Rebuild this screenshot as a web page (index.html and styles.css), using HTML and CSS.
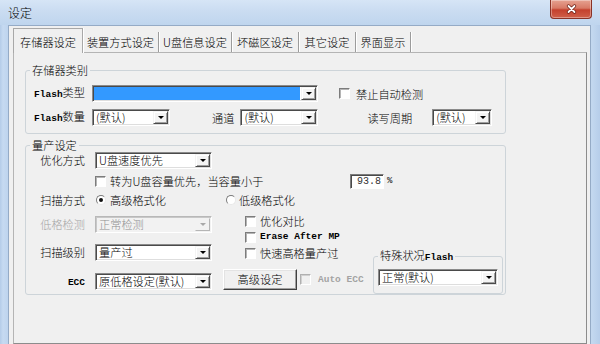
FILE: index.html
```html
<!DOCTYPE html>
<html lang="zh-CN">
<head>
<meta charset="utf-8">
<title>设定</title>
<link rel="stylesheet" href="styles.css">
</head>
<body>
<div class="window">
  <div class="titlebar">
    <span class="title">设定</span>
    <div class="close">
      <svg width="11" height="10" viewBox="0 0 11 10"><path d="M2.5 2 L8.5 8 M8.5 2 L2.5 8" stroke="#6a1e14" stroke-width="3.2" stroke-linecap="round"/><path d="M2.5 2 L8.5 8 M8.5 2 L2.5 8" stroke="#fff" stroke-width="1.8" stroke-linecap="round"/></svg>
    </div>
  </div>
  <div class="client">
    <div class="tabs">
      <div class="tab active t1">存储器设定</div>
      <div class="tab t2">装置方式设定</div>
      <div class="tab t3">U盘信息设定</div>
      <div class="tab t4">坏磁区设定</div>
      <div class="tab t5">其它设定</div>
      <div class="tab t6">界面显示</div>
    </div>
    <div class="panel">
      <fieldset class="group g1">
        <legend>存储器类别</legend>
        <div class="row">
          <span class="lbl"><span class="fx">Flash</span>类型</span>
          <div class="combo sel flash-type"><span class="val"></span><span class="arrow"></span></div>
          <span class="chk auto-detect"></span>
          <span class="chk-text">禁止自动检测</span>
        </div>
        <div class="row">
          <span class="lbl"><span class="fx">Flash</span>数量</span>
          <div class="combo flash-count"><span class="val">(默认)</span><span class="arrow"></span></div>
          <span class="channel-lbl">通道</span>
          <div class="combo channel"><span class="val">(默认)</span><span class="arrow"></span></div>
          <span class="cycle-lbl">读写周期</span>
          <div class="combo cycle"><span class="val">(默认)</span><span class="arrow"></span></div>
        </div>
      </fieldset>

      <fieldset class="group g2">
        <legend>量产设定</legend>
        <div class="row r-opt">
          <span class="lbl">优化方式</span>
          <div class="combo wide"><span class="val">U盘速度优先</span><span class="arrow"></span></div>
        </div>
        <div class="row r-cap">
          <span class="lbl"></span>
          <span class="chk cap-chk"></span>
          <span class="cap-text">转为U盘容量优先，当容量小于</span>
          <span class="num">93.8</span>
          <span class="pct">%</span>
        </div>
        <div class="row r-scan">
          <span class="lbl">扫描方式</span>
          <span class="radio on r1"></span>
          <span class="radio-text">高级格式化</span>
          <span class="radio r2"></span>
          <span class="radio-text t-low">低级格式化</span>
        </div>
        <div class="lower">
          <div class="lcol">
            <div class="row r-lowchk">
              <span class="lbl disabled">低格检测</span>
              <div class="combo wide dis"><span class="val">正常检测</span><span class="arrow"></span></div>
            </div>
            <div class="row r-level">
              <span class="lbl">扫描级别</span>
              <div class="combo wide"><span class="val">量产过</span><span class="arrow"></span></div>
            </div>
            <div class="row r-ecc">
              <span class="lbl"><span class="fx">ECC</span></span>
              <div class="combo wide"><span class="val">原低格设定(默认)</span><span class="arrow"></span></div>
            </div>
          </div>
          <div class="rcol">
            <div class="rcol-a">
              <div class="checks">
                <div class="crow"><span class="chk"></span><span class="chk-text">优化对比</span></div>
                <div class="crow"><span class="chk"></span><span class="chk-text fx">Erase After MP</span></div>
                <div class="crow"><span class="chk"></span><span class="chk-text">快速高格量产过</span></div>
              </div>
              <div class="btnrow">
                <span class="btn">高级设定</span>
                <span class="chk dchk"></span>
                <span class="chk-text fx disabled auto-ecc">Auto ECC</span>
              </div>
            </div>
            <fieldset class="group g3">
              <legend>特殊状况<span class="fx">Flash</span></legend>
              <div class="combo special"><span class="val">正常(默认)</span><span class="arrow"></span></div>
            </fieldset>
          </div>
        </div>
      </fieldset>
    </div>
  </div>
</div>
</body>
</html>
```

FILE: styles.css
```css
* { box-sizing: border-box; }
html, body { margin: 0; padding: 0; }
body {
  width: 600px;
  height: 344px;
  overflow: hidden;
  font-family: "Noto Sans CJK SC", "Noto Sans", sans-serif;
  font-size: 11.2px;
  font-weight: 300;
  line-height: 16px;
  color: #000;
  background: #c0d5ee;
}
.window {
  width: 600px;
  height: 344px;
  display: flex;
  flex-direction: column;
  background: linear-gradient(90deg, #b4cce8 0, #c6daf1 3px, #bed4ee 8px, #c3d8ef 592px, #b6cde9 600px);
}
.titlebar {
  height: 25px;
  flex: none;
  display: flex;
  justify-content: space-between;
  align-items: flex-start;
  padding: 0 8px;
  background: linear-gradient(180deg, #d6e5f6 0%, #cadcf1 45%, #bfd5ee 100%);
}
.title { margin-top: 6px; font-size: 12px; line-height: 14px; }
.close {
  width: 42px;
  height: 19px;
  border: 1px solid #8a3226;
  border-top: none;
  border-radius: 0 0 4px 4px;
  background: linear-gradient(180deg, #e6a291 0%, #d87a66 45%, #c4412d 55%, #d0604a 100%);
  box-shadow: inset 0 0 0 1px rgba(255,255,255,0.35);
  display: flex;
  align-items: center;
  justify-content: center;
}
.client {
  flex: 1;
  margin: 0 9px 0 8px;
  background: #f0f0f0;
  border: 1px solid #95abc6;
  border-bottom: none;
  padding: 2px 3px 0 4px;
  display: flex;
  flex-direction: column;
}
.tabs { display: flex; height: 24px; align-items: flex-end; flex: none; }
.tab {
  height: 20px;
  line-height: 20px;
  text-align: center;
  white-space: nowrap;
  border-right: 1px solid #9c9c9c;
  box-shadow: 1px 0 0 #ffffff;
}
.tab.active {
  height: 25px;
  border: 1px solid #a8a8a8;
  border-bottom: none;
  background: #f0f0f0;
  margin-bottom: -1px;
  padding-top: 3px;
  position: relative;
  z-index: 1;
}
.t1 { width: 70px; }
.t2 { width: 76px; }
.t3 { width: 73px; }
.t4 { width: 67px; }
.t5 { width: 57px; }
.t6 { width: 55px; }
.panel {
  flex: 1;
  border: 1px solid;
  border-color: #b4b4b4 #8c8c8c #8c8c8c #b4b4b4;
  background: #f0f0f0;
  padding: 10px 0 0 11px;
}
.group {
  margin: 0;
  min-inline-size: 0;
  border: 1px solid #cdd4d9;
  border-radius: 3px;
  padding: 0 6px;
}
.group legend { padding: 0 2px; margin-left: -2px; line-height: 14px; }
.g1 { width: 481px; padding-top: 8px; padding-bottom: 7px; }
.g2 { width: 481px; margin-top: 4px; padding-bottom: 0; }
.g3 { width: 130px; padding: 4px 4px 7px; flex: none; }
.g3 legend { margin-left: 0; }

.fx { font-family: "Liberation Mono", "DejaVu Sans Mono", monospace; font-weight: bold; font-size: 9.5px; }
.disabled { color: #a3a3a3; }

.row { display: flex; align-items: center; height: 17px; white-space: nowrap; }
.g1 .row + .row { margin-top: 7px; }
.lbl { width: 53px; flex: none; text-align: right; }

.combo {
  display: flex;
  height: 17px;
  flex: none;
  background: #fff;
  border: 1px solid;
  border-color: #8a8a8a #ffffff #ffffff #8a8a8a;
  box-shadow: inset 1px 1px 0 #4a4a4a, inset -1px -1px 0 #dedede;
  padding: 1px;
}
.combo .val {
  flex: 1;
  min-width: 0;
  padding-left: 2px;
  line-height: 13px;
  white-space: nowrap;
}
.combo .arrow {
  width: 15px;
  flex: none;
  background: #f4f4f4;
  border: 1px solid;
  border-color: #f4f4f4 #4a4a4a #4a4a4a #f4f4f4;
  box-shadow: inset 1px 1px 0 #fff, inset -1px -1px 0 #a0a0a0;
  display: flex;
  align-items: center;
  justify-content: center;
}
.combo .arrow::after {
  content: "";
  border-left: 3px solid transparent;
  border-right: 3px solid transparent;
  border-top: 3px solid #000;
}
.combo.sel .val { background: #3399ff; margin-right: 1px; }
.combo.dis { background: #f2f2f2; border-color: #b8b8b8 #fff #fff #b8b8b8; box-shadow: inset 1px 1px 0 #c8c8c8; }
.combo.dis .val { color: #8e8e8e; }
.combo.dis .arrow { background: #f2f2f2; border-color: #f2f2f2 #b5b5b5 #b5b5b5 #f2f2f2; box-shadow: none; }
.combo.dis .arrow::after { border-top-color: #a8a8a8; }

.flash-type { width: 226px; margin-left: 7px; }
.flash-count { width: 78px; margin-left: 7px; }
.channel-lbl { margin-left: 42px; }
.channel { width: 78px; margin-left: 6px; }
.cycle-lbl { margin-left: 49px; }
.cycle { width: 60px; margin-left: 20px; }
.wide { width: 117px; margin-left: 10px; }
.special { width: 120px; }

.chk {
  width: 11px;
  height: 11px;
  flex: none;
  background: #fff;
  border: 1px solid;
  border-color: #7c7c7c #ffffff #ffffff #7c7c7c;
  box-shadow: inset 1px 1px 0 #b4b4b4;
}
.chk.dchk { background: #f0f0f0; border-color: #b0b0b0 #fff #fff #b0b0b0; box-shadow: inset 1px 1px 0 #d0d0d0; }
.chk-text { margin-left: 6px; }
.auto-detect { margin-left: 21px; }

.g2 .r-opt { height: 16px; }
.r-cap { height: 16px; margin-top: 5px; }
.cap-chk { margin-left: 10px; }
.cap-text { margin-left: 4px; width: 240px; }
.num {
  width: 34px;
  height: 15px;
  background: #fff;
  border: 1px solid;
  border-color: #7c7c7c #fff #fff #7c7c7c;
  box-shadow: inset 1px 1px 0 #4a4a4a;
  text-align: right;
  padding-right: 2px;
  font-family: "Liberation Mono", monospace;
  font-weight: normal;
  font-size: 10px;
  line-height: 13px;
  color: #333;
}
.pct { margin-left: 3px; font-family: "Liberation Mono", monospace; font-size: 9px; font-weight: bold; color: #333; }

.r-scan { height: 16px; margin-top: 3px; }
.radio {
  width: 10px;
  height: 10px;
  flex: none;
  border-radius: 50%;
  background: #fff;
  border: 1px solid;
  border-color: #7a7a7a #e8e8e8 #e8e8e8 #7a7a7a;
  display: flex;
  align-items: center;
  justify-content: center;
}
.radio.on::after { content: ""; width: 4px; height: 4px; border-radius: 50%; background: #111; }
.r1 { margin-left: 11px; }
.radio-text { margin-left: 4px; }
.r2 { margin-left: 60px; }
.t-low { margin-left: 3px; }

.lower { display: flex; }
.lcol { width: 180px; flex: none; }
.lcol .row { height: 16px; }
.r-lowchk { margin-top: 8px; }
.r-level { margin-top: 12px; }
.r-ecc { margin-top: 13px; }

.rcol { margin-left: 11px; width: 280px; display: flex; align-items: flex-end; }
.rcol-a { width: 150px; flex: none; padding-bottom: 4px; }
.checks { padding-left: 22px; margin-top: 5px; }
.crow { display: flex; align-items: center; height: 16px; white-space: nowrap; }
.crow .chk-text { margin-left: 4px; }
.btnrow { display: flex; align-items: center; margin-top: 8px; height: 21px; white-space: nowrap; }
.btn {
  width: 74px;
  height: 21px;
  flex: none;
  background: #f0f0f0;
  border: 1px solid;
  border-color: #ffffff #404040 #404040 #ffffff;
  box-shadow: inset -1px -1px 0 #a0a0a0, inset 1px 1px 0 #e3e3e3;
  text-align: center;
  line-height: 18px;
}
.dchk { margin-left: 3px; }
.auto-ecc { margin-left: 7px; }
```
